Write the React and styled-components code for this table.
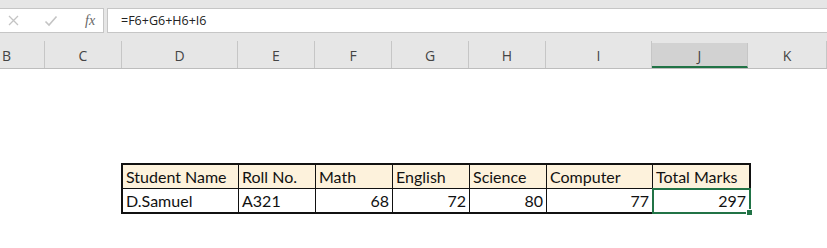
import React from 'react';
import styled, { createGlobalStyle } from 'styled-components';

const GlobalStyle = createGlobalStyle`
  html, body {
    margin: 0;
    padding: 0;
    background: #ffffff;
  }
  body {
    width: 827px;
    height: 248px;
    overflow: hidden;
  }
`;

const widths = [45, 77, 116, 77, 77, 77, 77, 106, 96, 79];
const letters = ['B', 'C', 'D', 'E', 'F', 'G', 'H', 'I', 'J', 'K'];

const Window = styled.div`
  width: 827px;
  height: 248px;
  display: flex;
  flex-direction: column;
  background: #ffffff;
`;

const TopArea = styled.div`
  background: #e6e6e6;
  padding-top: 8px;
  display: flex;
  flex-direction: column;
`;

const FormulaBar = styled.div`
  display: flex;
  height: 25px;
  gap: 3px;
`;

const IconBox = styled.div`
  width: 104px;
  background: #ffffff;
  border-top: 1px solid #c6c6c6;
  border-bottom: 1px solid #c6c6c6;
  border-right: 1px solid #c6c6c6;
  box-sizing: border-box;
  display: flex;
  align-items: center;
  padding-left: 8px;
  gap: 25px;
`;

const Fx = styled.span`
  font-family: "Liberation Serif", serif;
  font-style: italic;
  font-size: 14px;
  color: #666666;
  margin-left: 2px;
`;

const FormulaInput = styled.div`
  flex: 1;
  background: #ffffff;
  border-top: 1px solid #c6c6c6;
  border-bottom: 1px solid #c6c6c6;
  border-left: 1px solid #c6c6c6;
  box-sizing: border-box;
  display: flex;
  align-items: center;
  padding-left: 13px;
  font-family: "Open Sans", "Noto Sans", sans-serif;
  font-size: 12.5px;
  color: #222222;
`;

const HeaderRow = styled.div`
  margin-top: 8px;
  display: grid;
  grid-template-columns: ${widths.map((w) => `${w}px`).join(' ')};
  height: 27px;
  border-bottom: 1px solid #bdbdbd;
`;

const ColHead = styled.div`
  display: flex;
  align-items: center;
  justify-content: ${(p) => (p.$edge ? 'flex-start' : 'center')};
  padding-left: ${(p) => (p.$edge ? '2px' : '0')};
  box-sizing: border-box;
  border-right: 1px solid #c6c6c6;
  margin-top: ${(p) => (p.$selected ? '2px' : '0')};
  background: ${(p) => (p.$selected ? '#d2d2d2' : 'transparent')};
  border-bottom: ${(p) => (p.$selected ? '2px solid #217346' : 'none')};
  font-family: "Open Sans", "Noto Sans", sans-serif;
  font-size: 14px;
  color: #444444;
  padding-top: 2px;
`;

const Sheet = styled.div`
  flex: 1;
  background: #ffffff;
  padding: 95px 0 0 122px;
`;

const Table = styled.div`
  display: inline-grid;
  grid-template-columns: 116px 77px 77px 77px 77px 106px 96px;
  border: 2px solid #111111;
  margin-left: -1px;
  margin-top: -1px;
`;

const Cell = styled.div`
  position: relative;
  height: ${(p) => (p.$row === 0 ? '24px' : '23px')};
  box-sizing: border-box;
  display: flex;
  align-items: center;
  justify-content: ${(p) => (p.$num ? 'flex-end' : 'flex-start')};
  padding: 0 3px 1px 3px;
  background: ${(p) => (p.$head ? '#fdf2dc' : '#ffffff')};
  border-right: ${(p) => (p.$last ? 'none' : '1px solid #111111')};
  border-bottom: ${(p) => (p.$head ? '1px solid #111111' : 'none')};
  font-family: Lato, "Liberation Sans", sans-serif;
  font-size: 16px;
  color: #111111;
  white-space: nowrap;
`;

const Selection = styled.div`
  position: absolute;
  inset: -1px -2px -2px -1px;
  border: 2px solid #217346;
  pointer-events: none;
`;

const Handle = styled.div`
  position: absolute;
  right: -4px;
  bottom: -4px;
  width: 5px;
  height: 5px;
  background: #217346;
  border: 1px solid #ffffff;
`;

const headers = ['Student Name', 'Roll No.', 'Math', 'English', 'Science', 'Computer', 'Total Marks'];
const row = [
  { v: 'D.Samuel' },
  { v: 'A321' },
  { v: 68, num: true },
  { v: 72, num: true },
  { v: 80, num: true },
  { v: 77, num: true },
  { v: 297, num: true, selected: true },
];

const Cross = () => (
  <svg width="11" height="11" viewBox="0 0 11 11">
    <path d="M1 1 L10 10 M10 1 L1 10" stroke="#c4c4c4" strokeWidth="1.3" fill="none" />
  </svg>
);

const Check = () => (
  <svg width="14" height="12" viewBox="0 0 14 12">
    <path d="M1.5 6.5 L5 10 L12.5 1.5" stroke="#c4c4c4" strokeWidth="1.6" fill="none" />
  </svg>
);

function App() {
  return (
    <Window>
      <GlobalStyle />
      <TopArea>
        <FormulaBar>
          <IconBox>
            <Cross />
            <Check />
            <Fx>fx</Fx>
          </IconBox>
          <FormulaInput>=F6+G6+H6+I6</FormulaInput>
        </FormulaBar>
        <HeaderRow>
          {letters.map((l, i) => (
            <ColHead key={l} $edge={i === 0} $selected={l === 'J'}>
              {l}
            </ColHead>
          ))}
        </HeaderRow>
      </TopArea>
      <Sheet>
        <Table>
          {headers.map((h, i) => (
            <Cell key={h} $head $row={0} $last={i === headers.length - 1}>
              {h}
            </Cell>
          ))}
          {row.map((c, i) => (
            <Cell key={i} $row={1} $num={c.num} $last={i === row.length - 1}>
              {c.v}
              {c.selected && (
                <Selection>
                  <Handle />
                </Selection>
              )}
            </Cell>
          ))}
        </Table>
      </Sheet>
    </Window>
  );
}

export default App;
